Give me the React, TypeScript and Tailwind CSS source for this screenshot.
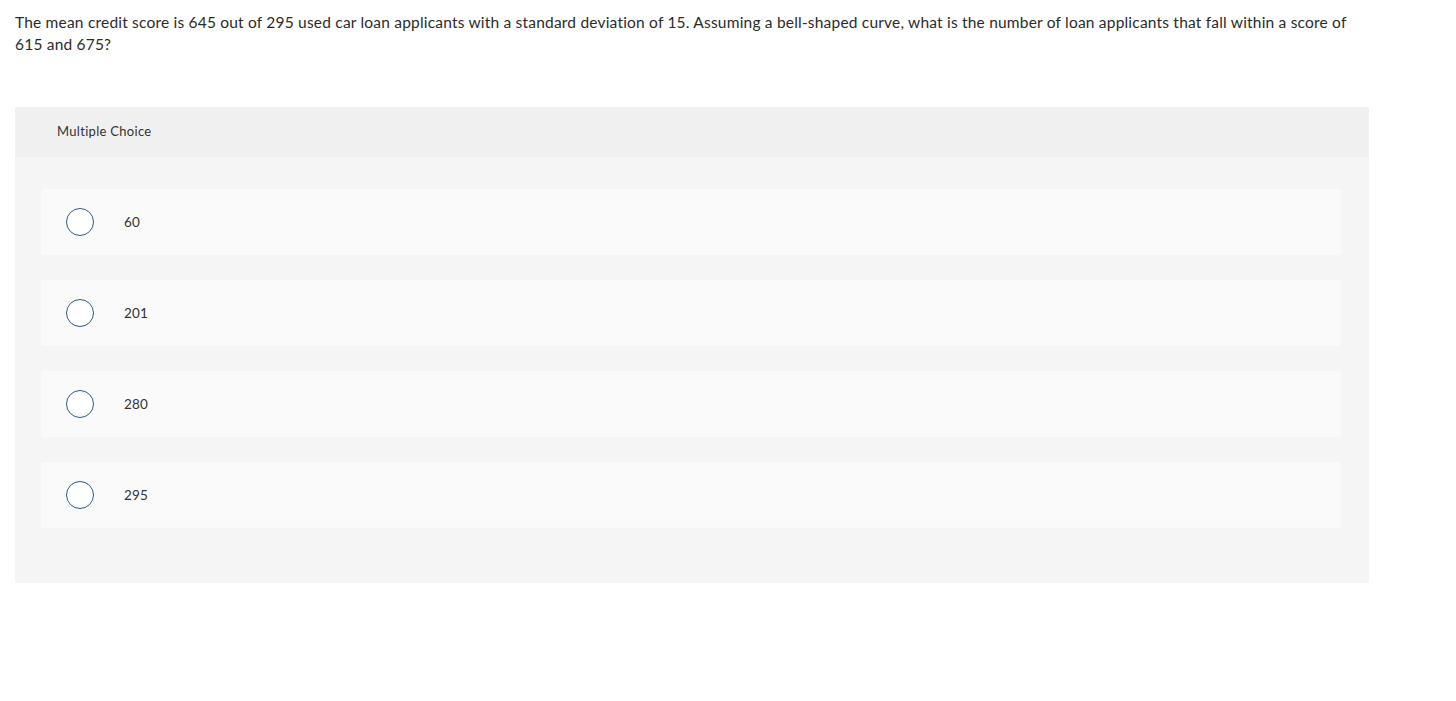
const options = ['60', '201', '280', '295'];

function Radio() {
  return (
    <span className="block w-[28px] h-[28px] rounded-full border-[1.5px] border-[#2c5b8c] bg-white shrink-0" />
  );
}

export default function App() {
  return (
    <div className="bg-white min-h-screen font-['Lato','Open_Sans',sans-serif] text-[#222]">
      <div className="pl-[15px] pt-[11px] w-[1369px]">
        <p className="text-[15.5px] leading-[22px] tracking-[0.2px] text-[#2b2b2b]">
          The mean credit score is 645 out of 295 used car loan applicants with a standard deviation of 15. Assuming a bell-shaped curve, what is the number of loan applicants that fall within a score of 615 and 675?
        </p>

        <div className="mt-[52px] w-[1354px] rounded-[2px] bg-[#f5f5f5] overflow-hidden">
          <div className="h-[50px] bg-[#f0f0f0] flex items-center pl-[42px]">
            <span className="text-[13px] tracking-[0.3px] text-[#333]">Multiple Choice</span>
          </div>
          <div className="pt-[32px] pb-[55px] pl-[26px] pr-[28px] flex flex-col gap-[25px]">
            {options.map((o) => (
              <div key={o} className="h-[66px] rounded-[3px] bg-[#fafafa] flex items-center pl-[25px]">
                <Radio />
                <span className="ml-[30px] text-[13.5px] tracking-[0.2px] text-[#333]">{o}</span>
              </div>
            ))}
          </div>
        </div>
      </div>
    </div>
  );
}
